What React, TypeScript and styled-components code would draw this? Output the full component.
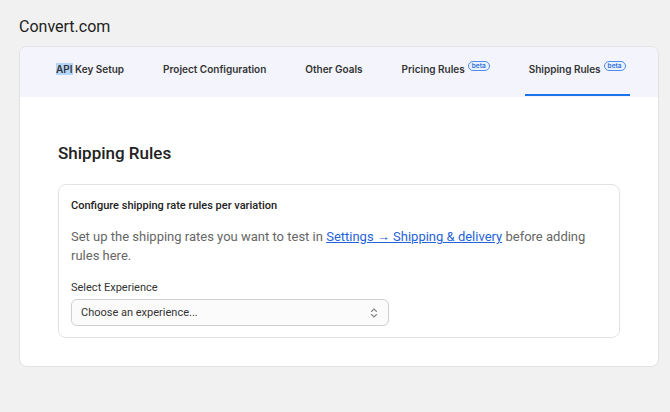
import styled, { createGlobalStyle } from "styled-components";

const GlobalStyle = createGlobalStyle`
  body {
    margin: 0;
    background: #f1f1f1;
    font-family: Roboto, "Liberation Sans", sans-serif;
  }
`;

const tabs = [
  { label: "API Key Setup", beta: false },
  { label: "Project Configuration", beta: false },
  { label: "Other Goals", beta: false },
  { label: "Pricing Rules", beta: true },
  { label: "Shipping Rules", beta: true },
];

function ChevronUpDown() {
  return (
    <svg width="8" height="12" viewBox="0 0 8 12" fill="none" stroke="#888" strokeWidth="1.1" strokeLinecap="round" strokeLinejoin="round">
      <path d="M1.5 4.5 L4 2 L6.5 4.5" />
      <path d="M1.5 7.5 L4 10 L6.5 7.5" />
    </svg>
  );
}

function App() {
  const active = 4;
  return (
    <Page>
      <GlobalStyle />
      <SiteTitle>Convert.com</SiteTitle>
      <Card>
        <TabBar>
          {tabs.map((t, i) => (
            <Tab key={t.label} $active={i === active}>
              {i === 0 ? (
                <span>
                  <Selected>API</Selected> Key Setup
                </span>
              ) : (
                t.label
              )}
              {t.beta && <Beta>beta</Beta>}
            </Tab>
          ))}
        </TabBar>
        <Body>
          <Heading>Shipping Rules</Heading>
          <Panel>
            <PanelTitle>Configure shipping rate rules per variation</PanelTitle>
            <Description>
              Set up the shipping rates you want to test in{" "}
              <Link href="#">Settings → Shipping &amp; delivery</Link> before adding rules here.
            </Description>
            <Label>Select Experience</Label>
            <Select>
              <span>Choose an experience...</span>
              <ChevronUpDown />
            </Select>
          </Panel>
        </Body>
      </Card>
    </Page>
  );
}

const Page = styled.div`
  padding: 16px 11px 0 19px;
  width: 640px;
`;

const SiteTitle = styled.h1`
  margin: 0 0 8px;
  font-family: Roboto, "Liberation Sans", sans-serif;
  font-size: 16px;
  font-weight: 400;
  color: #222;
  line-height: 22px;
`;

const Card = styled.div`
  background: #fff;
  border: 1px solid #e2e2e2;
  border-radius: 8px;
  overflow: hidden;
`;

const TabBar = styled.div`
  display: flex;
  align-items: stretch;
  gap: 31px;
  height: 50px;
  padding: 0 0 0 32px;
  background: #f4f5fc;
`;

const Tab = styled.div<{ $active: boolean }>`
  display: flex;
  align-items: center;
  padding: 0 4px;
  font-family: Inter, "Liberation Sans", sans-serif;
  font-size: 10px;
  font-weight: 600;
  color: #333;
  border-bottom: 2px solid ${(p) => (p.$active ? "#1a73e8" : "transparent")};
  margin-bottom: 1px;
  padding-bottom: 3px;
`;

const Selected = styled.span`
  background: #b4d5fb;
`;

const Beta = styled.span`
  margin: -6px 0 0 3px;
  padding: 0 3px;
  border: 1px solid #4f8ef0;
  border-radius: 6px;
  background: #eaf2fe;
  color: #2f6fdc;
  font-size: 6.5px;
  font-weight: 600;
  line-height: 8px;
`;

const Body = styled.div`
  padding: 45px 38px 28px 38px;
`;

const Heading = styled.h2`
  margin: 0 0 20px;
  font-size: 17px;
  font-weight: 500;
  color: #222;
  line-height: 22px;
`;

const Panel = styled.div`
  border: 1px solid #e2e2e2;
  border-radius: 8px;
  padding: 13px 12px 11px 12px;
`;

const PanelTitle = styled.div`
  font-size: 11px;
  font-weight: 500;
  color: #222;
  line-height: 16px;
  margin-bottom: 13px;
`;

const Description = styled.p`
  margin: 0 0 16px;
  font-size: 13px;
  line-height: 19px;
  color: #666;
  max-width: 530px;
`;

const Link = styled.a`
  color: #2563d9;
  text-decoration: underline;
`;

const Label = styled.div`
  font-size: 11px;
  color: #333;
  line-height: 14px;
  margin-bottom: 4px;
`;

const Select = styled.div`
  display: flex;
  align-items: center;
  justify-content: space-between;
  width: 318px;
  height: 27px;
  box-sizing: border-box;
  padding: 0 10px 0 9px;
  border: 1px solid #cfcfcf;
  border-radius: 6px;
  background: #fbfbfb;
  font-size: 11px;
  color: #333;
`;

export default App;
